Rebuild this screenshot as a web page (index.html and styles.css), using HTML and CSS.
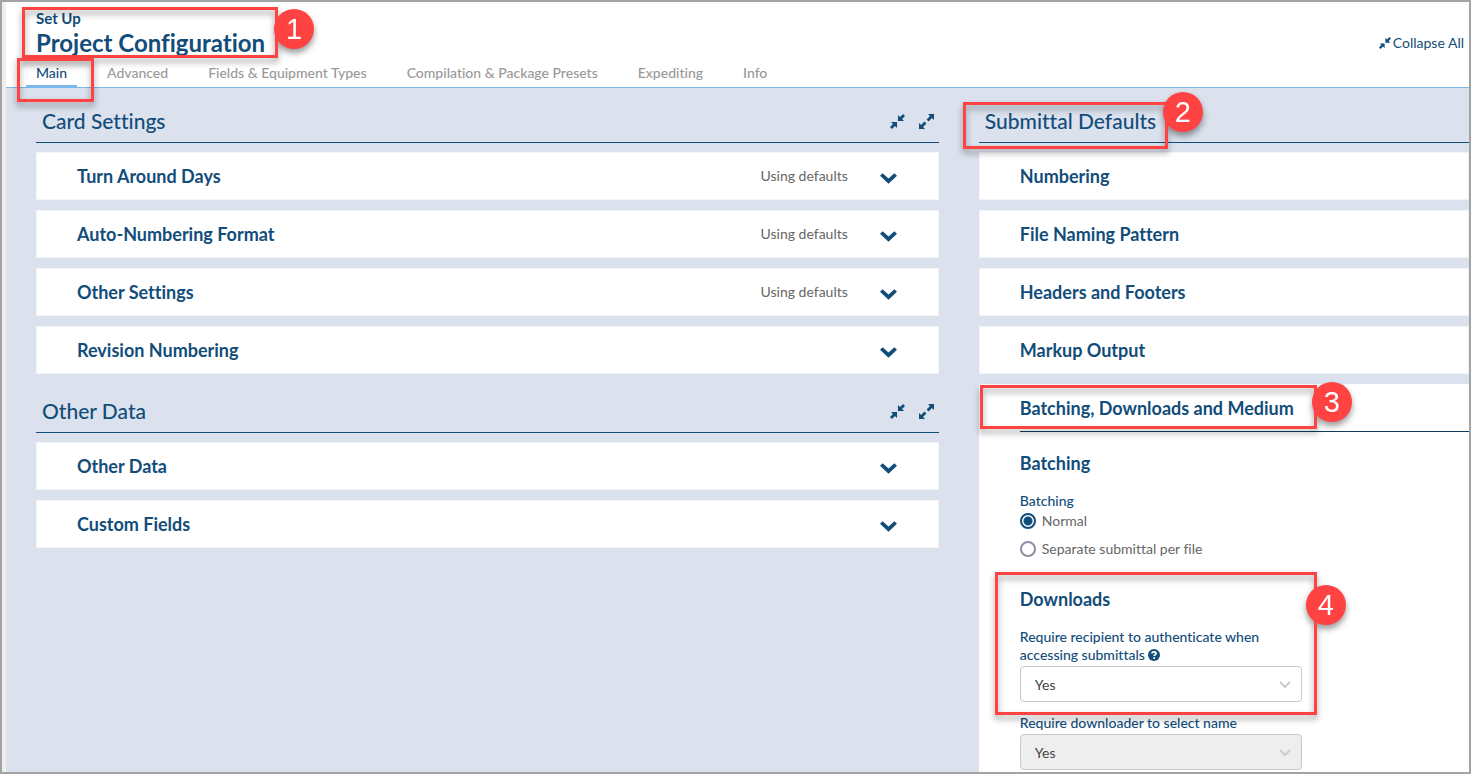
FILE: index.html
```html
<!DOCTYPE html>
<html lang="en">
<head>
  <meta charset="UTF-8" />
  <meta name="viewport" content="width=device-width, initial-scale=1" />
  <title>Project Configuration</title>
  <link rel="stylesheet" href="styles.css">
</head>
<body>

  <!-- Shared icons -->
  <svg class="sprite" aria-hidden="true">
    <symbol id="collapse" viewBox="0 0 16 16">
      <path d="M8.500 1v6.500H15l-2.200-2.200L16 2.100 13.900 0l-3.200 3.200zM7.500 15V8.500H1l2.200 2.200L0 13.900 2.100 16l3.200-3.200z" />
    </symbol>
    <symbol id="expand" viewBox="0 0 16 16">
      <path d="M16 0v6.500l-2.200-2.200-3.600 3.600-2.100-2.100 3.600-3.600L9.500 0zM0 16V9.500l2.200 2.200 3.600-3.600 2.100 2.100-3.600 3.600L6.500 16z" />
    </symbol>
    <symbol id="chevron" viewBox="0 0 16 10">
      <path d="M2.500 0L8 5 13.500 0 16 2.500 8 10 0 2.500z" />
    </symbol>
    <symbol id="help" viewBox="0 0 12 12">
      <circle cx="6" cy="6" r="6" />
      <path d="M4 4.600C4 3.300 4.900 2.800 6 2.800s2 .6 2 1.600C8 5.700 6.200 5.600 6.200 7" fill="none" stroke="#fff" stroke-width="1.800" />
      <circle cx="6.200" cy="9" r="1" fill="#fff" />
    </symbol>
  </svg>

  <div class="page">
    <header class="header">
      <div class="header-top">
        <div class="titles">
          <p class="eyebrow">Set Up</p>
          <h1>Project Configuration</h1>
          <span class="mark mark-title"><b class="badge">1</b></span>
        </div>
        <button type="button" class="collapse-all"><svg><use href="#collapse" /></svg>Collapse All</button>
      </div>
      <nav class="tabs">
        <a href="#main" class="active">Main<span class="mark mark-tab"></span></a>
        <a href="#advanced">Advanced</a>
        <a href="#fields">Fields &amp; Equipment Types</a>
        <a href="#compilation">Compilation &amp; Package Presets</a>
        <a href="#expediting">Expediting</a>
        <a href="#info">Info</a>
      </nav>
    </header>

    <main class="columns" id="main">
      <div class="column">
        <section>
          <div class="section-head">
            <h2>Card Settings</h2>
            <button type="button" aria-label="Collapse Card Settings"><svg><use href="#collapse" /></svg></button>
            <button type="button" aria-label="Expand Card Settings"><svg><use href="#expand" /></svg></button>
          </div>
          <div class="card">
            <h3>Turn Around Days</h3>
            <span class="status">Using defaults</span>
            <button type="button" aria-label="Open Turn Around Days"><svg><use href="#chevron" /></svg></button>
          </div>
          <div class="card">
            <h3>Auto-Numbering Format</h3>
            <span class="status">Using defaults</span>
            <button type="button" aria-label="Open Auto-Numbering Format"><svg><use href="#chevron" /></svg></button>
          </div>
          <div class="card">
            <h3>Other Settings</h3>
            <span class="status">Using defaults</span>
            <button type="button" aria-label="Open Other Settings"><svg><use href="#chevron" /></svg></button>
          </div>
          <div class="card">
            <h3>Revision Numbering</h3>
            <button type="button" aria-label="Open Revision Numbering"><svg><use href="#chevron" /></svg></button>
          </div>
        </section>

        <section>
          <div class="section-head">
            <h2>Other Data</h2>
            <button type="button" aria-label="Collapse Other Data"><svg><use href="#collapse" /></svg></button>
            <button type="button" aria-label="Expand Other Data"><svg><use href="#expand" /></svg></button>
          </div>
          <div class="card">
            <h3>Other Data</h3>
            <button type="button" aria-label="Open Other Data"><svg><use href="#chevron" /></svg></button>
          </div>
          <div class="card">
            <h3>Custom Fields</h3>
            <button type="button" aria-label="Open Custom Fields"><svg><use href="#chevron" /></svg></button>
          </div>
        </section>
      </div>

      <div class="column">
        <section>
          <div class="section-head">
            <h2>Submittal Defaults</h2>
            <span class="mark mark-section"><b class="badge">2</b></span>
          </div>
          <div class="card"><h3>Numbering</h3></div>
          <div class="card"><h3>File Naming Pattern</h3></div>
          <div class="card"><h3>Headers and Footers</h3></div>
          <div class="card"><h3>Markup Output</h3></div>

          <form class="panel">
            <h3 class="panel-title">Batching, Downloads and Medium</h3>
            <span class="mark mark-panel"><b class="badge">3</b></span>

            <h3>Batching</h3>
            <fieldset>
              <legend>Batching</legend>
              <label class="radio"><input type="radio" name="batching" checked />Normal</label>
              <label class="radio"><input type="radio" name="batching" />Separate submittal per file</label>
            </fieldset>

            <div class="downloads">
              <h3>Downloads</h3>
              <label for="authenticate">Require recipient to authenticate when accessing submittals <svg class="help"><use href="#help" /></svg></label>
              <div class="select">
                <select id="authenticate"><option>Yes</option><option>No</option></select>
                <svg viewBox="0 0 12 8"><path d="M1 1l5 5 5-5" /></svg>
              </div>
              <span class="mark mark-downloads"><b class="badge">4</b></span>
            </div>

            <label for="selectName">Require downloader to select name</label>
            <div class="select">
              <select id="selectName" disabled><option>Yes</option><option>No</option></select>
              <svg viewBox="0 0 12 8"><path d="M1 1l5 5 5-5" /></svg>
            </div>
          </form>
        </section>
      </div>
    </main>
  </div>

</body>
</html>
```
FILE: styles.css
```css
* {
  box-sizing: border-box;
}
body {
  margin: 0;
  font-family: Lato, "Liberation Sans", sans-serif;
  font-size: 14px;
  line-height: 18px;
  font-variant-ligatures: none;
  color: #124d7a;
}
h1, h2, h3, p {
  margin: 0;
}
button {
  padding: 0;
  border: 0;
  background: none;
  color: inherit;
  font: inherit;
  cursor: pointer;
}
svg {
  display: block;
  fill: currentColor;
}
.sprite {
  position: absolute;
  width: 0;
  height: 0;
}
.page {
  display: flex;
  flex-direction: column;
  min-height: 100vh;
  border: 2px solid #a3a3a3;
  background: #fff;
  box-shadow: inset 4px 0 #eee;
  padding-left: 4px;
  overflow: hidden;
}

/* Header and tabs */
.header {
  border-bottom: 1px solid #7cb8ea;
}
.header-top {
  display: flex;
  justify-content: space-between;
  align-items: flex-end;
  height: 60px;
  padding: 0 5px 0 30px;
}
.titles {
  position: relative;
  padding-bottom: 3px;
}
.eyebrow {
  font-size: 15px;
  font-weight: 700;
}
h1 {
  font-size: 24px;
  line-height: 32px;
  font-weight: 700;
}
.collapse-all {
  display: flex;
  align-items: center;
  gap: 2px;
  margin-bottom: 10px;
}
.collapse-all svg {
  width: 12px;
  height: 12px;
}
.tabs {
  display: flex;
  gap: 20px;
  padding-left: 20px;
}
.tabs a {
  position: relative;
  height: 25px;
  padding: 2px 10px 0;
  border-bottom: 2px solid transparent;
  color: #999;
  font-weight: 500;
  text-decoration: none;
}
.tabs .active {
  border-color: #7cb8ea;
  color: #124d7a;
}

/* Columns */
.columns {
  flex: 1;
  display: grid;
  grid-template-columns: 63% 1fr;
  column-gap: 40px;
  padding: 15px 0 0 30px;
  background: #dbe1ed;
}
section + section {
  margin-top: 19px;
}
.section-head {
  position: relative;
  display: flex;
  align-items: center;
  gap: 14px;
  height: 40px;
  margin-bottom: 9px;
  padding: 0 5px 2px 6px;
  border-bottom: 1px solid #124d7a;
}
.section-head h2 {
  flex: 1;
  padding-bottom: 2px;
  font-size: 21px;
  line-height: 26px;
  font-weight: 500;
}
.section-head svg {
  width: 15px;
  height: 15px;
}
.card {
  display: flex;
  align-items: center;
  height: 48px;
  padding: 0 41px 0 40px;
  border: 1px solid #f2f4f9;
  background: #fff;
}
.card + .card,
.panel {
  margin-top: 10px;
}
h3 {
  flex: 1;
  font-size: 18px;
  line-height: 24px;
  font-weight: 700;
}
.status {
  margin-right: 32px;
  color: #666;
}
.card svg {
  width: 17px;
  height: 11px;
  margin-top: 4px;
}

/* Open panel */
.panel {
  position: relative;
  padding: 0 0 2px 41px;
  background: #fff;
}
.panel-title {
  height: 48px;
  margin-bottom: 19px;
  border-bottom: 1px solid #123a5c;
  line-height: 48px;
}
fieldset {
  margin: 17px 0 21px;
  padding: 0;
  border: 0;
}
legend {
  padding: 0;
  font-weight: 500;
}
.panel label {
  display: block;
  max-width: 282px;
  font-weight: 500;
}
.panel .radio {
  display: flex;
  align-items: center;
  gap: 6px;
  height: 22px;
  margin-bottom: 6px;
  color: #666;
  font-weight: 400;
}
.radio input {
  appearance: none;
  width: 16px;
  height: 16px;
  margin: 0;
  border: 2px solid #8f8fa3;
  border-radius: 50%;
}
.radio input:checked {
  border-color: #124d7a;
  background: radial-gradient(#124d7a 4px, #fff 5px);
}
.downloads {
  position: relative;
  margin-bottom: 12px;
}
.downloads h3 {
  margin-bottom: 17px;
}
.help {
  display: inline-block;
  width: 12px;
  height: 12px;
  vertical-align: -1px;
}
.select {
  position: relative;
  max-width: 282px;
  margin-top: 2px;
}
.select select {
  appearance: none;
  display: block;
  width: 100%;
  height: 36px;
  padding: 2px 14px 0;
  border: 1px solid #c8c8c8;
  border-radius: 4px;
  background: #fff;
  color: #444;
  font: inherit;
  opacity: 1;
}
.select select:disabled {
  background: #eee;
}
.select svg {
  position: absolute;
  top: 15px;
  right: 11px;
  width: 12px;
  height: 8px;
  fill: none;
  stroke: #ccc;
  stroke-width: 2;
  pointer-events: none;
}

/* Numbered callouts */
.mark {
  position: absolute;
  z-index: 1;
  border: 3px solid #ff4343;
  filter: drop-shadow(0 4px 3px rgba(0, 0, 0, 0.4));
  pointer-events: none;
}
.badge {
  position: absolute;
  width: 40px;
  height: 40px;
  border-radius: 50%;
  background: #ff4343;
  color: #fff;
  font: 29px/40px "Liberation Sans", Arial, sans-serif;
  text-align: center;
}
.mark-title {
  top: -2px;
  left: -14px;
  width: 256px;
  height: 51px;
}
.mark-title .badge {
  top: -1px;
  left: 249px;
}
.mark-tab {
  top: -4px;
  left: -9px;
  width: 77px;
  height: 44px;
}
.mark-section {
  top: -1px;
  left: -16px;
  width: 205px;
  height: 47px;
}
.mark-section .badge {
  top: -13px;
  left: 197px;
}
.mark-panel {
  top: 1px;
  left: 1px;
  width: 337px;
  height: 44px;
}
.mark-panel .badge {
  top: -6px;
  left: 329px;
}
.mark-downloads {
  top: -15px;
  left: -25px;
  width: 322px;
  height: 143px;
}
.mark-downloads .badge {
  top: 10px;
  left: 308px;
}
```
